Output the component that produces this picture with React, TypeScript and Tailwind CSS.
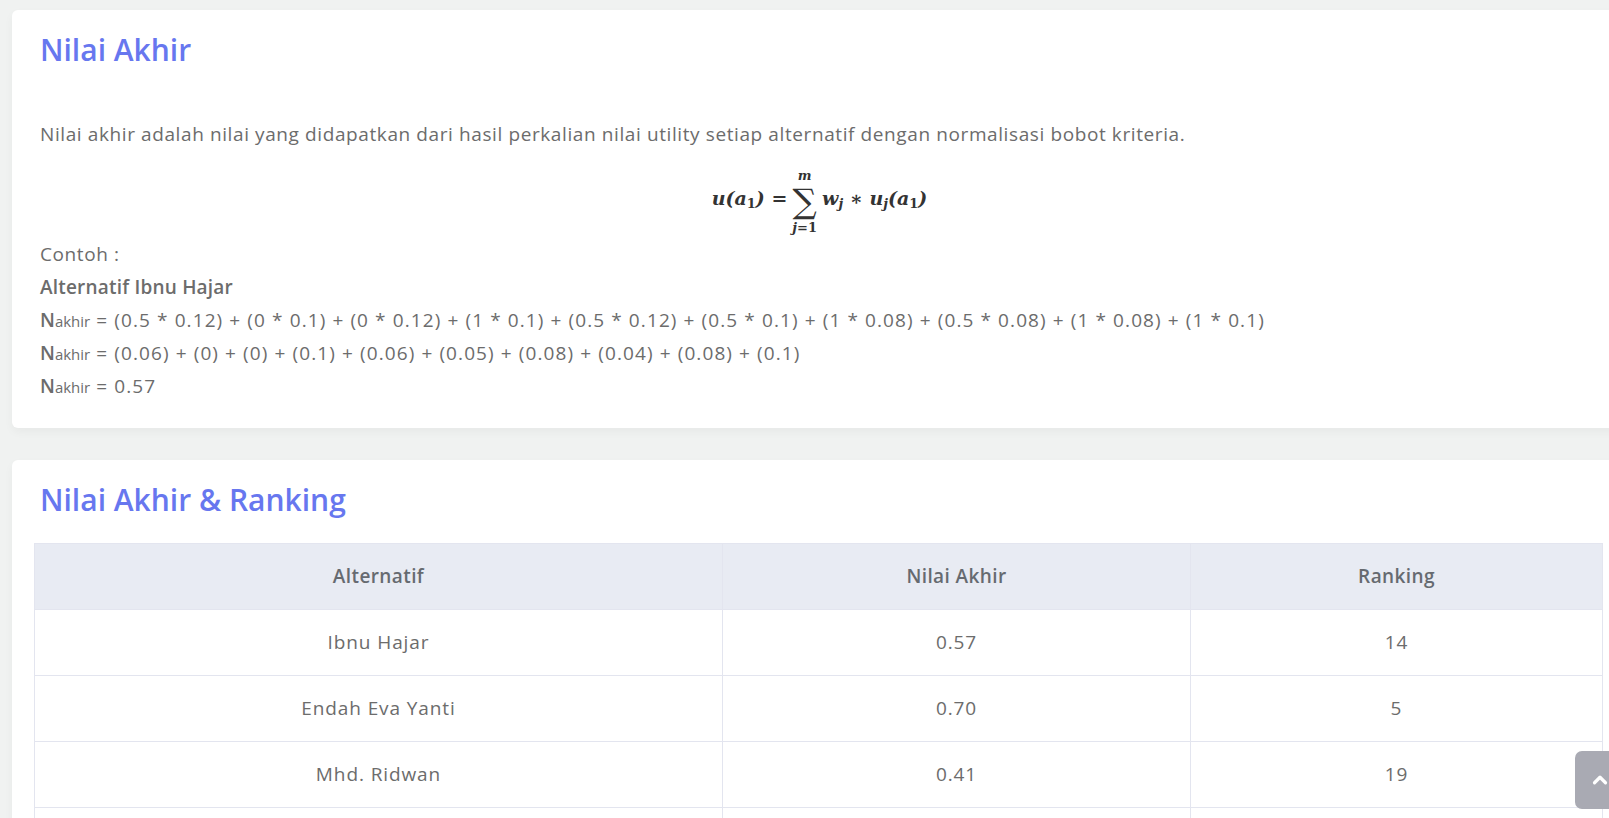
import React from 'react';

const rows = [
  { name: 'Ibnu Hajar', nilai: '0.57', rank: '14' },
  { name: 'Endah Eva Yanti', nilai: '0.70', rank: '5' },
  { name: 'Mhd. Ridwan', nilai: '0.41', rank: '19' },
  { name: '', nilai: '', rank: '' },
];

const Nakhir = ({ children }: { children: React.ReactNode }) => (
  <p className="h-[33px] leading-[33px] whitespace-nowrap tracking-[1.1px]">
    <span className="font-semibold tracking-normal">N</span>
    <span className="text-[15px] tracking-normal">akhir</span> = {children}
  </p>
);

const Formula = () => (
  <div className="flex justify-center h-[90px] pt-[10px] pl-[4px]">
    <div
      className="flex items-center text-[19px] font-bold italic text-[#333]"
      style={{ fontFamily: '"DejaVu Serif", "Liberation Serif", serif' }}
    >
      <span>
        u(a<sub className="not-italic text-[13px]">1</sub>) =
      </span>
      <span className="flex flex-col items-center mx-[5px] mt-[8px] leading-none">
        <span className="text-[13px] leading-[14px] mb-[3px]">m</span>
        <span className="not-italic font-normal text-[34px] leading-[30px]">∑</span>
        <span className="text-[13px] leading-[14px] mt-[5px]">
          j<span className="not-italic">=1</span>
        </span>
      </span>
      <span>
        w<sub className="text-[13px]">j</sub> ∗ u<sub className="text-[13px]">j</sub>(a
        <sub className="not-italic text-[13px]">1</sub>)
      </span>
    </div>
  </div>
);

export default function App() {
  return (
    <div
      className="relative w-[1609px] h-[818px] overflow-hidden bg-[#f0f2f1] text-[#6c6c6c]"
      style={{ fontFamily: '"Open Sans", "Noto Sans", sans-serif' }}
    >
      <div className="pl-[12px] pt-[10px] w-[1640px]">
        {/* Nilai Akhir card */}
        <section className="w-[1611px] h-[418px] bg-white rounded-[6px] shadow-[0_4px_10px_rgba(0,0,0,0.04)] px-[28px] pt-[22px]">
          <h2 className="text-[30px] leading-[36px] font-semibold text-[#6777ef]">Nilai Akhir</h2>
          <p className="mt-[52px] text-[19px] leading-[28px] tracking-[0.6px]">
            Nilai akhir adalah nilai yang didapatkan dari hasil perkalian nilai utility setiap alternatif dengan normalisasi bobot kriteria.
          </p>
          <Formula />
          <div className="text-[19px]">
            <p className="h-[33px] leading-[33px] tracking-[0.6px]">Contoh :</p>
            <p className="h-[33px] leading-[33px] font-semibold tracking-[0.2px]">Alternatif Ibnu Hajar</p>
            <Nakhir>
              (0.5 * 0.12) + (0 * 0.1) + (0 * 0.12) + (1 * 0.1) + (0.5 * 0.12) + (0.5 * 0.1) + (1 * 0.08) + (0.5 * 0.08) + (1 * 0.08) + (1 * 0.1)
            </Nakhir>
            <Nakhir>(0.06) + (0) + (0) + (0.1) + (0.06) + (0.05) + (0.08) + (0.04) + (0.08) + (0.1)</Nakhir>
            <Nakhir>0.57</Nakhir>
          </div>
        </section>

        {/* Ranking card */}
        <section className="mt-[32px] w-[1611px] h-[400px] bg-white rounded-[6px] shadow-[0_4px_10px_rgba(0,0,0,0.04)] px-[22px] pt-[22px]">
          <h2 className="pl-[6px] text-[30px] leading-[36px] font-semibold text-[#6777ef]">Nilai Akhir &amp; Ranking</h2>
          <table className="mt-[25px] w-[1568px] table-fixed border-collapse text-[19px] text-center">
            <colgroup>
              <col className="w-[688px]" />
              <col className="w-[468px]" />
              <col className="w-[412px]" />
            </colgroup>
            <thead>
              <tr className="h-[66px] bg-[#e8ebf3]">
                <th className="border border-[#e3e5ef] font-semibold tracking-[0.4px] text-[#666a70]">Alternatif</th>
                <th className="border border-[#e3e5ef] font-semibold tracking-[0.4px] text-[#666a70]">Nilai Akhir</th>
                <th className="border border-[#e3e5ef] font-semibold tracking-[0.4px] text-[#666a70]">Ranking</th>
              </tr>
            </thead>
            <tbody>
              {rows.map((r, i) => (
                <tr key={i} className="h-[66px]">
                  <td className="border border-[#e3e5ef] tracking-[0.9px]">{r.name}</td>
                  <td className="border border-[#e3e5ef] tracking-[0.9px]">{r.nilai}</td>
                  <td className="border border-[#e3e5ef] tracking-[0.9px]">{r.rank}</td>
                </tr>
              ))}
            </tbody>
          </table>
        </section>
      </div>

      {/* back to top */}
      <button className="absolute left-[1575px] top-[751px] w-[50px] h-[58px] rounded-[7px] bg-[#a9aab3] flex items-center justify-center">
        <svg width="22" height="22" viewBox="0 0 24 24" fill="none" stroke="white" strokeWidth="3.5" strokeLinecap="round" strokeLinejoin="round">
          <path d="M6 15l6-6 6 6" />
        </svg>
      </button>
    </div>
  );
}
